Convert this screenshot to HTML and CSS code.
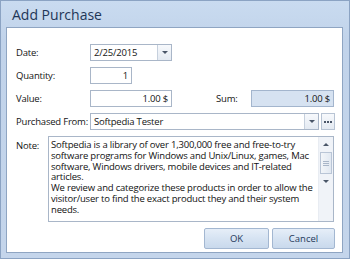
FILE: index.html
```html
<!doctype html>
<html lang="en">
   <head>
      <meta charset="UTF-8" />
      <title>Add Purchase</title>
      <link rel="stylesheet" href="styles.css">
   </head>
   <body>
      <div class="window">
         <div class="titlebar">Add Purchase</div>
         <div class="client">
            <div class="row">
               <label class="label">Date:</label>
               <div class="combo date">
                  <span class="value">2/25/2015</span>
                  <span class="drop"><i class="arrow"></i></span>
               </div>
            </div>
            <div class="row">
               <label class="label">Quantity:</label>
               <div class="field qty">1</div>
            </div>
            <div class="row">
               <label class="label">Value:</label>
               <div class="field money">1.00 $</div>
               <label class="sum-label">Sum:</label>
               <div class="field money sum">1.00 $</div>
            </div>
            <div class="row">
               <label class="label">Purchased From:</label>
               <div class="combo vendor">
                  <span class="value">Softpedia Tester</span>
                  <span class="drop"><i class="arrow"></i></span>
               </div>
               <span class="more"><i></i><i></i><i></i></span>
            </div>
            <div class="row note-row">
               <label class="label note-label">Note:</label>
               <div class="memo">
                  <div class="memo-text">Softpedia is a library of over 1,300,000 free and free-to-try software programs for Windows and Unix/Linux, games, Mac software, Windows drivers, mobile devices and IT-related articles.<br>We review and categorize these products in order to allow the visitor/user to find the exact product they and their system needs.</div>
                  <div class="scrollbar">
                     <span class="sb-btn"><i class="arrow up"></i></span>
                     <span class="thumb"><i class="grip"></i></span>
                     <span class="sb-btn"><i class="arrow"></i></span>
                  </div>
               </div>
            </div>
            <div class="buttons">
               <button class="btn">OK</button>
               <button class="btn">Cancel</button>
            </div>
         </div>
      </div>
   </body>
</html>
```

FILE: styles.css
```css
* {
   margin: 0;
   padding: 0;
   box-sizing: border-box;
}
body {
   font-family: "Open Sans", "Noto Sans", sans-serif;
   font-size: 9.5px;
   letter-spacing: -0.2px;
   color: #141414;
   background: #fff;
}
.window {
   width: 350px;
   height: 259px;
   display: flex;
   flex-direction: column;
   background: linear-gradient(#c9dbf0, #c1d3ea 40px, #c4d5eb);
   border: 1px solid #8ba3c3;
}
.titlebar {
   height: 26px;
   padding: 4px 0 0 11px;
   font-size: 14px;
   letter-spacing: 0;
   color: #1e3657;
}
.client {
   flex: 1;
   margin: 0 6px 5px 5px;
   background: #fff;
   border: 1px solid #8fa5c2;
   padding: 16px 7px 0 9px;
   display: flex;
   flex-direction: column;
   gap: 6px;
}
.row {
   display: flex;
   align-items: center;
   height: 17px;
}
.label {
   width: 74px;
   flex: none;
   white-space: nowrap;
}
.field,
.combo {
   height: 17px;
   border: 1px solid #a9b6c8;
   background: #fff;
   display: flex;
   align-items: center;
   padding: 0 3px;
}
.field {
   justify-content: flex-end;
}
.qty {
   width: 42px;
}
.money {
   width: 82px;
}
.sum-label {
   margin-left: 44px;
   width: 35px;
}
.sum {
   width: 83px;
   background: #d6e2f1;
   border-color: #a3b5cd;
}
.combo {
   padding: 0 0 0 3px;
   justify-content: space-between;
}
.date {
   width: 82px;
}
.vendor {
   width: 229px;
}
.drop {
   width: 14px;
   height: 15px;
   border-left: 1px solid #c6d0dd;
   background: linear-gradient(#f7f9fc, #e4eaf2);
   display: flex;
   align-items: center;
   justify-content: center;
}
.arrow {
   width: 0;
   height: 0;
   border-left: 3px solid transparent;
   border-right: 3px solid transparent;
   border-top: 3px solid #4a5668;
}
.arrow.up {
   border-top: none;
   border-bottom: 3px solid #4a5668;
}
.more {
   margin-left: 2px;
   width: 14px;
   height: 17px;
   border: 1px solid #b8c4d4;
   background: linear-gradient(#f7f9fc, #e4eaf2);
   display: flex;
   align-items: center;
   justify-content: center;
   gap: 1px;
}
.more i {
   width: 2px;
   height: 2px;
   background: #4a5668;
}
.note-row {
   height: 86px;
   align-items: flex-start;
}
.note-label {
   width: 32px;
   padding-top: 3px;
}
.memo {
   width: 286px;
   height: 86px;
   border: 1px solid #a9b6c8;
   display: flex;
}
.memo-text {
   flex: 1;
   padding: 3px 2px 0 2px;
   line-height: 10.8px;
   color: #111;
}
.scrollbar {
   width: 15px;
   display: flex;
   flex-direction: column;
   background: #f0f3f8;
   border-left: 1px solid #e8ecf2;
}
.sb-btn {
   height: 15px;
   display: flex;
   align-items: center;
   justify-content: center;
}
.thumb {
   height: 22px;
   margin: 0 1px;
   border: 1px solid #b9c5d6;
   background: linear-gradient(90deg, #f2f5f9, #e1e8f1);
   display: flex;
   align-items: center;
   justify-content: center;
}
.grip {
   width: 6px;
   height: 5px;
   border-top: 1px solid #a9b6c8;
   border-bottom: 1px solid #a9b6c8;
   background: linear-gradient(transparent 1px, #a9b6c8 1px, #a9b6c8 2px, transparent 2px);
}
.buttons {
   display: flex;
   justify-content: flex-end;
   gap: 3px;
}
.btn {
   width: 63px;
   height: 21px;
   font-family: inherit;
   font-size: 9.5px;
   color: #1e395b;
   border: 1px solid #a3b7d1;
   border-radius: 2px;
   background: linear-gradient(#e6eef8, #d6e3f2 50%, #c9d9ec);
}
.btn:first-child {
   width: 65px;
}
```
